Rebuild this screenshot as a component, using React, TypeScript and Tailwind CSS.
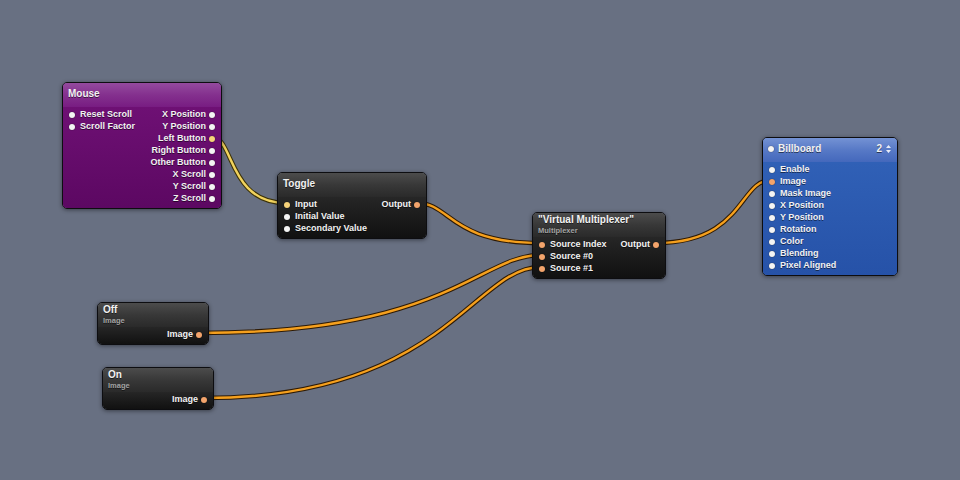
import React from "react";

type Port = { label: string; color?: "yellow" | "orange" };

type NodeProps = {
  x: number;
  y: number;
  w: number;
  title: string;
  subtitle?: string;
  theme: "black" | "purple" | "blue";
  inputs?: Port[];
  outputs?: Port[];
  titleDot?: boolean;
  titleRight?: string;
};

const headerStyles = {
  black: "bg-linear-to-b from-[#4c4c4c] via-[#383838] to-[#2a2a2a]",
  purple: "bg-linear-to-b from-[#944a9e] via-[#84308e] to-[#781c82]",
  blue: "bg-linear-to-b from-[#7492d4] via-[#5779c6] to-[#4468bc]",
};

const bodyStyles = {
  black: "bg-linear-to-b from-[#262626] to-[#111111]",
  purple: "bg-linear-to-b from-[#6e1074] to-[#5c0862]",
  blue: "bg-linear-to-b from-[#3060b6] to-[#2652a8]",
};

function Dot({ color }: { color?: "yellow" | "orange" }) {
  const fill =
    color === "yellow"
      ? "bg-[#f5d27a]"
      : color === "orange"
        ? "bg-[#f3a46c]"
        : "bg-[#f4f4f4]";
  return (
    <span
      className={`block w-[6px] h-[6px] rounded-full shrink-0 ${fill} shadow-[0_0_1px_rgba(0,0,0,0.8)]`}
    />
  );
}

function Node({
  x,
  y,
  w,
  title,
  subtitle,
  theme,
  inputs = [],
  outputs = [],
  titleDot,
  titleRight,
}: NodeProps) {
  return (
    <div
      className="absolute rounded-[5px] border border-[#0d0d10] overflow-hidden shadow-[0_1px_4px_rgba(0,0,0,0.45)] text-[#f2f2f2] [text-shadow:0_1px_0_rgba(0,0,0,0.55)]"
      style={{ left: x, top: y, width: w }}
    >
      <div
        className={`${headerStyles[theme]} flex flex-col h-[24px] px-[5px] ${
          subtitle ? "pt-[1px]" : "pt-[5px]"
        }`}
      >
        <div className="flex items-center gap-[4px] text-[10px] font-bold leading-[12px]">
          {titleDot && <Dot />}
          <span className="flex-1">{title}</span>
          {titleRight && (
            <span className="flex items-center gap-[4px] pr-[1px]">
              {titleRight}
              <svg width="5" height="8" viewBox="0 0 5 8">
                <path d="M2.5 0 L5 3 H0 Z M2.5 8 L5 5 H0 Z" fill="#e8ecf6" />
              </svg>
            </span>
          )}
        </div>
        {subtitle && (
          <div className="text-[7.5px] font-bold leading-[9px] text-[#a4a4a4]">
            {subtitle}
          </div>
        )}
      </div>
      <div className={`${bodyStyles[theme]} flex justify-between pt-[2px] pb-[3px]`}>
        <div className="flex flex-col">
          {inputs.map((p) => (
            <div
              key={p.label}
              className="h-[12px] flex items-center gap-[5px] pl-[6px] text-[9px] font-bold whitespace-nowrap"
            >
              <Dot color={p.color} />
              <span>{p.label}</span>
            </div>
          ))}
        </div>
        <div className="flex flex-col items-end">
          {outputs.map((p) => (
            <div
              key={p.label}
              className="h-[12px] flex items-center gap-[3px] pr-[6px] text-[9px] font-bold whitespace-nowrap"
            >
              <span>{p.label}</span>
              <Dot color={p.color} />
            </div>
          ))}
        </div>
      </div>
    </div>
  );
}

type Wire = {
  from: [number, number];
  to: [number, number];
  a: number;
  b: number;
  yellow?: boolean;
};

const wires: Wire[] = [
  { from: [212, 137], to: [286, 203], a: 22, b: 58, yellow: true },
  { from: [417, 203], to: [541, 243], a: 34, b: 92 },
  { from: [199, 333], to: [541, 255], a: 250, b: 62 },
  { from: [204, 398], to: [541, 267], a: 240, b: 68 },
  { from: [656, 243], to: [771, 180], a: 88, b: 32 },
];

function wirePath(w: Wire) {
  const [x1, y1] = w.from;
  const [x2, y2] = w.to;
  return `M${x1} ${y1} C${x1 + w.a} ${y1} ${x2 - w.b} ${y2} ${x2} ${y2}`;
}

export default function App() {
  return (
    <div className="relative w-[960px] h-[480px] overflow-hidden bg-[#687082] font-['Liberation_Sans',Arial,sans-serif]">
      <svg className="absolute inset-0" width="960" height="480">
        {wires.map((w, i) => (
          <g key={i}>
            <path
              d={wirePath(w)}
              fill="none"
              stroke={w.yellow ? "#3c3208" : "#2e1a04"}
              strokeWidth="4.5"
            />
            <path
              d={wirePath(w)}
              fill="none"
              stroke={w.yellow ? "#f2d35e" : "#f5a01e"}
              strokeWidth="2.4"
            />
          </g>
        ))}
      </svg>

      <Node
        x={62}
        y={82}
        w={160}
        theme="purple"
        title="Mouse"
        inputs={[{ label: "Reset Scroll" }, { label: "Scroll Factor" }]}
        outputs={[
          { label: "X Position" },
          { label: "Y Position" },
          { label: "Left Button", color: "yellow" },
          { label: "Right Button" },
          { label: "Other Button" },
          { label: "X Scroll" },
          { label: "Y Scroll" },
          { label: "Z Scroll" },
        ]}
      />

      <Node
        x={277}
        y={172}
        w={150}
        theme="black"
        title="Toggle"
        inputs={[
          { label: "Input", color: "yellow" },
          { label: "Initial Value" },
          { label: "Secondary Value" },
        ]}
        outputs={[{ label: "Output", color: "orange" }]}
      />

      <Node
        x={532}
        y={212}
        w={134}
        theme="black"
        title={"\"Virtual Multiplexer\""}
        subtitle="Multiplexer"
        inputs={[
          { label: "Source Index", color: "orange" },
          { label: "Source #0", color: "orange" },
          { label: "Source #1", color: "orange" },
        ]}
        outputs={[{ label: "Output", color: "orange" }]}
      />

      <Node
        x={762}
        y={137}
        w={136}
        theme="blue"
        title="Billboard"
        titleDot
        titleRight="2"
        inputs={[
          { label: "Enable" },
          { label: "Image", color: "orange" },
          { label: "Mask Image" },
          { label: "X Position" },
          { label: "Y Position" },
          { label: "Rotation" },
          { label: "Color" },
          { label: "Blending" },
          { label: "Pixel Aligned" },
        ]}
      />

      <Node
        x={97}
        y={302}
        w={112}
        theme="black"
        title="Off"
        subtitle="Image"
        outputs={[{ label: "Image", color: "orange" }]}
      />

      <Node
        x={102}
        y={367}
        w={112}
        theme="black"
        title="On"
        subtitle="Image"
        outputs={[{ label: "Image", color: "orange" }]}
      />
    </div>
  );
}
